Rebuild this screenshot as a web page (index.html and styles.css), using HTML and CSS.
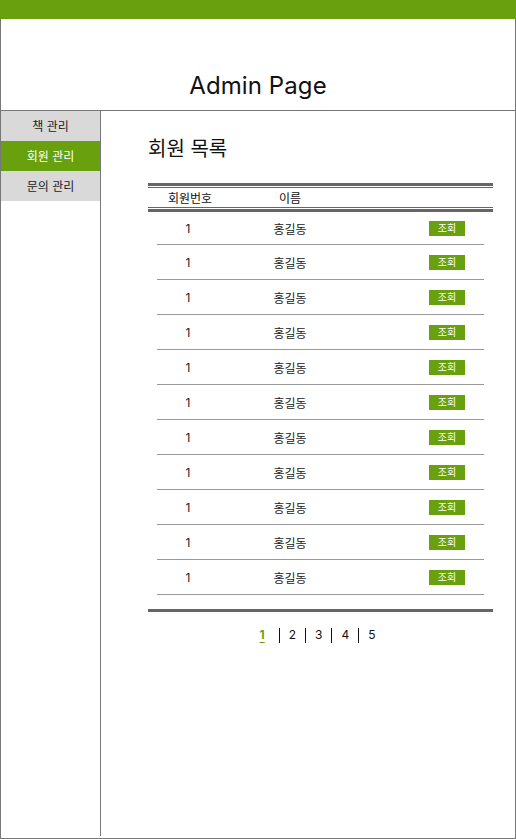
FILE: index.html
```html
<!DOCTYPE html>
<html lang="ko">
<head>
<meta charset="utf-8">
<link rel="stylesheet" href="styles.css">
</head>
<body>
<div class="page">
  <div class="topbar"></div>
  <div class="frame">
    <header class="header"><h1 class="title">Admin Page</h1></header>
    <div class="main">
      <nav class="sidebar">
        <a class="nav-item">책 관리</a>
        <a class="nav-item active">회원 관리</a>
        <a class="nav-item">문의 관리</a>
      </nav>
      <section class="content">
        <h2 class="heading">회원 목록</h2>
        <div class="table">
          <div class="thead">
            <span class="c1 h1">회원번호</span><span class="c2">이름</span><span class="c3"></span>
          </div>
          <div class="tbody">
            <div class="row"><span class="c1">1</span><span class="c2">홍길동</span><span class="c3"><button class="btn">조회</button></span></div>
            <div class="row"><span class="c1">1</span><span class="c2">홍길동</span><span class="c3"><button class="btn">조회</button></span></div>
            <div class="row"><span class="c1">1</span><span class="c2">홍길동</span><span class="c3"><button class="btn">조회</button></span></div>
            <div class="row"><span class="c1">1</span><span class="c2">홍길동</span><span class="c3"><button class="btn">조회</button></span></div>
            <div class="row"><span class="c1">1</span><span class="c2">홍길동</span><span class="c3"><button class="btn">조회</button></span></div>
            <div class="row"><span class="c1">1</span><span class="c2">홍길동</span><span class="c3"><button class="btn">조회</button></span></div>
            <div class="row"><span class="c1">1</span><span class="c2">홍길동</span><span class="c3"><button class="btn">조회</button></span></div>
            <div class="row"><span class="c1">1</span><span class="c2">홍길동</span><span class="c3"><button class="btn">조회</button></span></div>
            <div class="row"><span class="c1">1</span><span class="c2">홍길동</span><span class="c3"><button class="btn">조회</button></span></div>
            <div class="row"><span class="c1">1</span><span class="c2">홍길동</span><span class="c3"><button class="btn">조회</button></span></div>
            <div class="row"><span class="c1">1</span><span class="c2">홍길동</span><span class="c3"><button class="btn">조회</button></span></div>
          </div>
        </div>
        <div class="pager">
          <a class="pg current">1</a><span class="sep"></span>
          <a class="pg">2</a><span class="sep"></span>
          <a class="pg">3</a><span class="sep"></span>
          <a class="pg">4</a><span class="sep"></span>
          <a class="pg">5</a>
        </div>
      </section>
    </div>
  </div>
</div>
</body>
</html>
```

FILE: styles.css
```css
* { box-sizing: border-box; }
html, body { margin: 0; padding: 0; background: #fff; }
body {
  font-family: "Inter", "Noto Sans CJK KR", sans-serif;
  color: #111;
}
.page { width: 516px; height: 839px; display: flex; flex-direction: column; }
.topbar { height: 19px; background: #69a00e; flex: none; }
.frame {
  flex: 1;
  border: 1px solid #777;
  border-top: none;
  display: flex;
  flex-direction: column;
}
.header {
  height: 92px;
  border-bottom: 1px solid #777;
  display: flex;
  align-items: flex-end;
  justify-content: center;
  flex: none;
}
.title {
  margin: 0 0 9px;
  font-weight: 400;
  font-size: 24px;
  line-height: 30px;
  color: #111;
  letter-spacing: 0.1px;
}
.main { flex: 1; display: flex; padding-bottom: 2px; }
.sidebar {
  width: 100px;
  border-right: 1px solid #777;
  display: flex;
  flex-direction: column;
  flex: none;
}
.nav-item {
  height: 30px;
  padding-bottom: 1px;
  background: #d9d9d9;
  display: flex;
  align-items: center;
  justify-content: center;
  font-size: 12px;
  color: #222;
}
.nav-item.active { background: #69a00e; color: #fff; }
.content { flex: 1; padding: 24px 22px 0 47px; }
.heading {
  margin: 0;
  font-size: 20px;
  font-weight: 400;
  line-height: 28px;
  color: #111;
}
.table { margin-top: 20px; }
.thead {
  display: flex;
  align-items: center;
  height: 29px;
  padding: 0 9px;
  border-top: 3px solid #666;
  border-bottom: 3px solid #666;
  position: relative;
  font-size: 12px;
}
.thead::before, .thead::after {
  content: "";
  position: absolute;
  left: 0; right: 0;
  height: 1px;
  background: #666;
}
.thead::before { top: 1px; }
.thead::after { bottom: 1px; }
.c1 { width: 62px; text-align: center; }
.c1.h1 { padding-left: 4px; }
.c2 { width: 142px; text-align: center; }
.c3 { flex: 1; display: flex; justify-content: flex-end; padding-right: 19px; }
.tbody {
  border-bottom: 3px solid #666;
  padding-bottom: 14px;
}
.row {
  display: flex;
  align-items: center;
  margin: 0 9px;
  height: 35px;
  border-bottom: 1px solid #999;
  font-size: 12px;
  color: #222;
}
.row:first-child { height: 33px; }
.btn {
  width: 36px;
  height: 15px;
  padding: 0;
  border: none;
  background: #69a00e;
  color: #fff;
  font-family: inherit;
  font-size: 10px;
  line-height: 15px;
}
.pager {
  display: flex;
  align-items: center;
  justify-content: center;
  margin-top: 15px;
  padding-right: 6px;
  font-size: 12px;
  color: #111;
}
.pg { padding: 0 9px; line-height: 16px; }
.pg.current {
  color: #69a00e;
  font-weight: 700;
  padding-right: 14px;
  text-decoration: underline;
  text-underline-offset: 3px;
}
.sep { width: 1px; height: 15px; background: #111; }
```
